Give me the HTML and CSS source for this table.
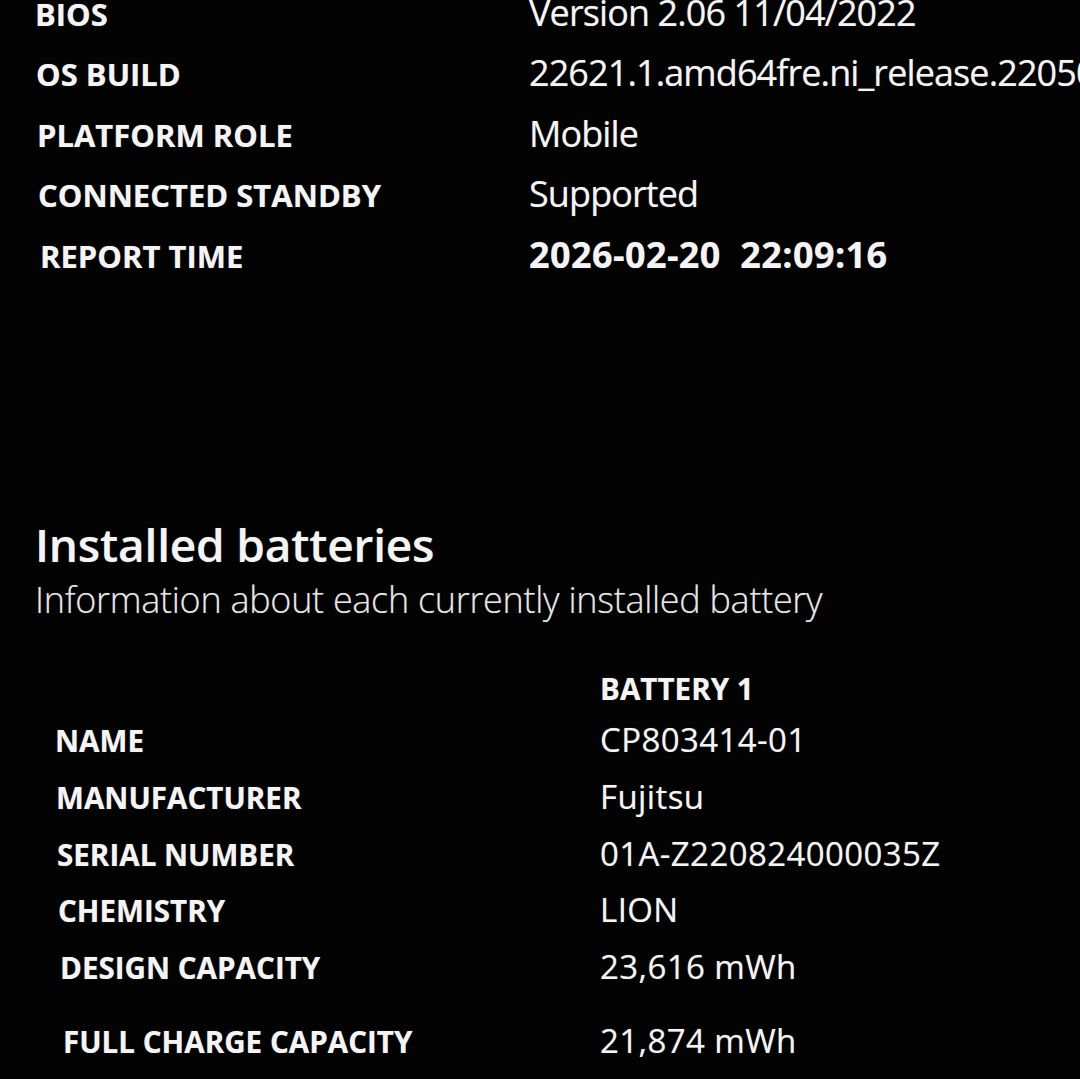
FILE: index.html
```html
<!DOCTYPE html>
<html lang="en">
<head>
<meta charset="utf-8">
<title>Battery report</title>
<link rel="stylesheet" href="styles.css">
</head>
<body>
<main class="page">
  <section class="sys">
    <div class="row"><span class="label">BIOS</span><span class="value">Version 2.06 11/04/2022</span></div>
    <div class="row"><span class="label">OS BUILD</span><span class="value">22621.1.amd64fre.ni_release.220506-1250</span></div>
    <div class="row"><span class="label">PLATFORM ROLE</span><span class="value">Mobile</span></div>
    <div class="row"><span class="label">CONNECTED STANDBY</span><span class="value">Supported</span></div>
    <div class="row"><span class="label">REPORT TIME</span><span class="value value-strong">2026-02-20&nbsp; 22:09:16</span></div>
  </section>

  <section class="batteries">
    <h2 class="title">Installed batteries</h2>
    <p class="subtitle">Information about each currently installed battery</p>

    <div class="btable">
      <div class="brow bhead"><span class="blabel"></span><span class="bcol">BATTERY 1</span></div>
      <div class="brow"><span class="blabel">NAME</span><span class="bvalue">CP803414-01</span></div>
      <div class="brow"><span class="blabel">MANUFACTURER</span><span class="bvalue">Fujitsu</span></div>
      <div class="brow"><span class="blabel">SERIAL NUMBER</span><span class="bvalue">01A-Z220824000035Z</span></div>
      <div class="brow"><span class="blabel">CHEMISTRY</span><span class="bvalue">LION</span></div>
      <div class="brow"><span class="blabel">DESIGN CAPACITY</span><span class="bvalue">23,616 mWh</span></div>
      <div class="brow brow-spaced"><span class="blabel">FULL CHARGE CAPACITY</span><span class="bvalue">21,874 mWh</span></div>
    </div>
  </section>
</main>
</body>
</html>
```

FILE: styles.css
```css
html, body {
  margin: 0;
  padding: 0;
  background: #030303;
}

body {
  width: 1080px;
  height: 1079px;
  overflow: hidden;
  color: #f4f4f4;
  font-family: "Open Sans", "Noto Sans", "Liberation Sans", sans-serif;
  text-shadow: 0 0 1px rgba(255, 255, 255, 0.45);
}

.page {
  padding-left: 35px;
}

/* ---------- system info table ---------- */
.sys {
  margin-top: -12.5px;
  display: flex;
  flex-direction: column;
}

.row {
  display: grid;
  grid-template-columns: 494px auto;
  align-items: baseline;
  height: 60.5px;
  white-space: nowrap;
}

.label {
  font-weight: 700;
  font-size: 31px;
  line-height: normal;
  letter-spacing: 0;
}

.value {
  font-weight: 400;
  font-size: 36px;
  line-height: normal;
  letter-spacing: -0.9px;
}

.value-strong {
  font-weight: 700;
  letter-spacing: 0.4px;
}

.row:nth-child(2) .label { padding-left: 1px; }
.row:nth-child(3) .label { padding-left: 2px; }
.row:nth-child(4) .label { padding-left: 3px; }
.row:nth-child(5) .label { padding-left: 5px; }

/* ---------- installed batteries ---------- */
.batteries {
  margin-top: 223px;
}

.title {
  margin: 0;
  font-size: 46px;
  font-weight: 600;
  line-height: normal;
  letter-spacing: -0.2px;
}

.subtitle {
  margin: 0;
  font-size: 36px;
  font-weight: 300;
  line-height: normal;
  letter-spacing: -0.3px;
  color: #e6e6e6;
}

.btable {
  margin-top: 43.5px;
  padding-left: 20px;
  display: flex;
  flex-direction: column;
}

.brow {
  display: grid;
  grid-template-columns: 545px auto;
  align-items: baseline;
  height: 56.75px;
  white-space: nowrap;
}

.bhead {
  height: 49.7px;
}

.brow-spaced {
  padding-top: 17px;
}

.blabel,
.bcol {
  font-weight: 700;
  font-size: 29.6px;
  line-height: normal;
}

.bvalue {
  font-weight: 400;
  font-size: 33px;
  line-height: normal;
  letter-spacing: 0.4px;
}

.brow:nth-child(3) .blabel { padding-left: 1px; }
.brow:nth-child(4) .blabel { padding-left: 2px; }
.brow:nth-child(5) .blabel { padding-left: 3px; }
.brow:nth-child(6) .blabel { padding-left: 5px; }
.brow:nth-child(7) .blabel { padding-left: 8px; }
```
